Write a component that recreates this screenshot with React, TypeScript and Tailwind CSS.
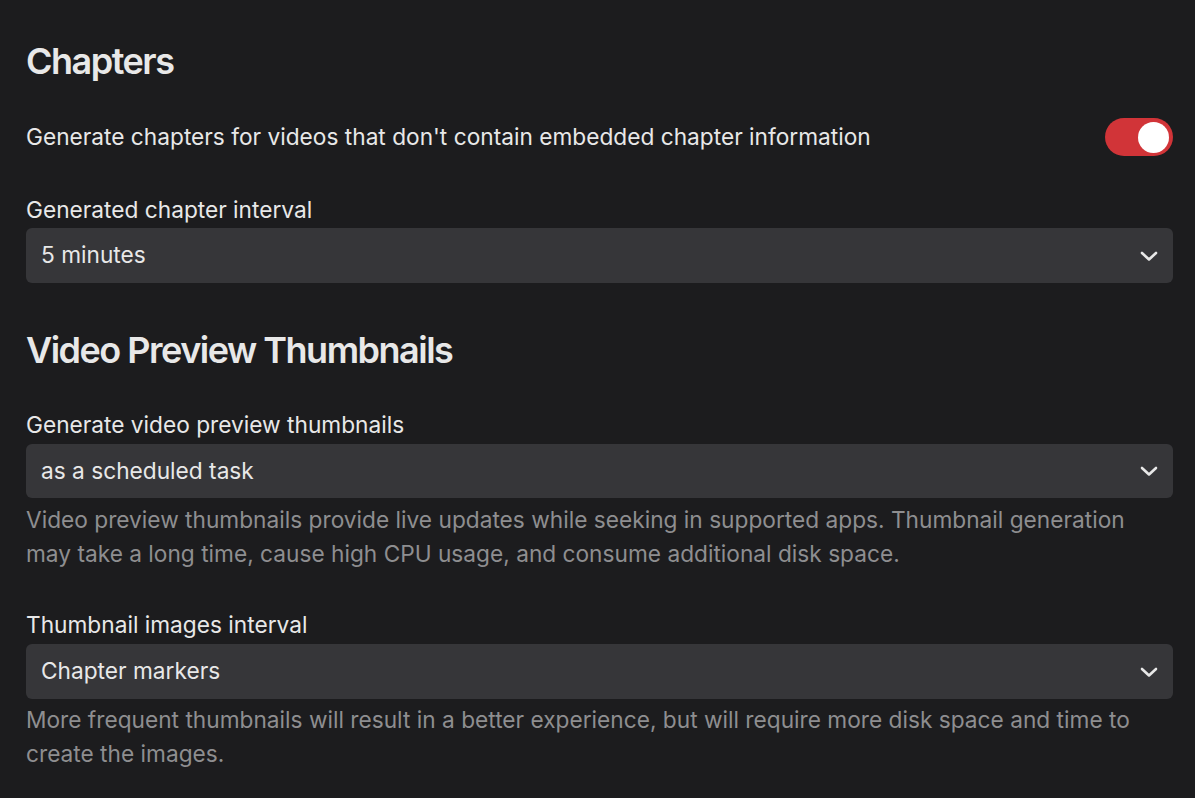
import React, { useState } from 'react';

const Chevron: React.FC = () => (
  <svg width="20" height="20" viewBox="0 0 20 20" className="shrink-0">
    <polyline points="3,7 10,13.5 17,7" fill="none" stroke="#e8e8e8" strokeWidth="2.6" strokeLinecap="round" strokeLinejoin="round" />
  </svg>
);

const Select: React.FC<{ value: string; className?: string }> = ({ value, className }) => (
  <div className={`flex items-center justify-between rounded-[6px] bg-[#363639] pl-[15px] pr-[14px] ${className ?? ''}`}>
    <span className="text-[22.7px] text-[#e8e8e8]">{value}</span>
    <Chevron />
  </div>
);

const App: React.FC = () => {
  const [chapters, setChapters] = useState(true);

  return (
    <div className="min-h-[798px] bg-[#1c1c1e] pl-[26px] pr-[22px] pt-[41px] font-['Inter',sans-serif] text-[#e8e8e8]">
      <h2 className="text-[36px] font-semibold leading-[40px] tracking-[-1.5px]">Chapters</h2>

      <div className="mt-[37px] flex h-[38px] items-center justify-between">
        <span className="text-[22.7px]">Generate chapters for videos that don't contain embedded chapter information</span>
        <button
          onClick={() => setChapters(!chapters)}
          className={`flex h-[38px] w-[68px] items-center rounded-full px-[4px] ${chapters ? 'justify-end bg-[#d13438]' : 'justify-start bg-[#4a4a4e]'}`}
        >
          <span className="block h-[31px] w-[31px] rounded-full bg-white" />
        </button>
      </div>

      <div className="mt-[40px] text-[22.7px] leading-[28px]">Generated chapter interval</div>
      <Select value="5 minutes" className="mt-[4px] h-[55px]" />

      <h2 className="mt-[47px] text-[36px] font-semibold leading-[40px] tracking-[-1.5px]">Video Preview Thumbnails</h2>

      <div className="mt-[41px] text-[22.7px] leading-[28px]">Generate video preview thumbnails</div>
      <Select value="as a scheduled task" className="mt-[5px] h-[54px]" />
      <p className="mt-[5px] text-[22.7px] leading-[34px] text-[#8e8e90]">
        Video preview thumbnails provide live updates while seeking in supported apps. Thumbnail generation may take a long time, cause high CPU usage, and consume additional disk space.
      </p>

      <div className="mt-[40px] text-[22.7px] leading-[28px]">Thumbnail images interval</div>
      <Select value="Chapter markers" className="mt-[5px] h-[55px]" />
      <p className="mt-[4px] text-[22.7px] leading-[34px] text-[#8e8e90]">
        More frequent thumbnails will result in a better experience, but will require more disk space and time to create the images.
      </p>
    </div>
  );
};

export default App;
